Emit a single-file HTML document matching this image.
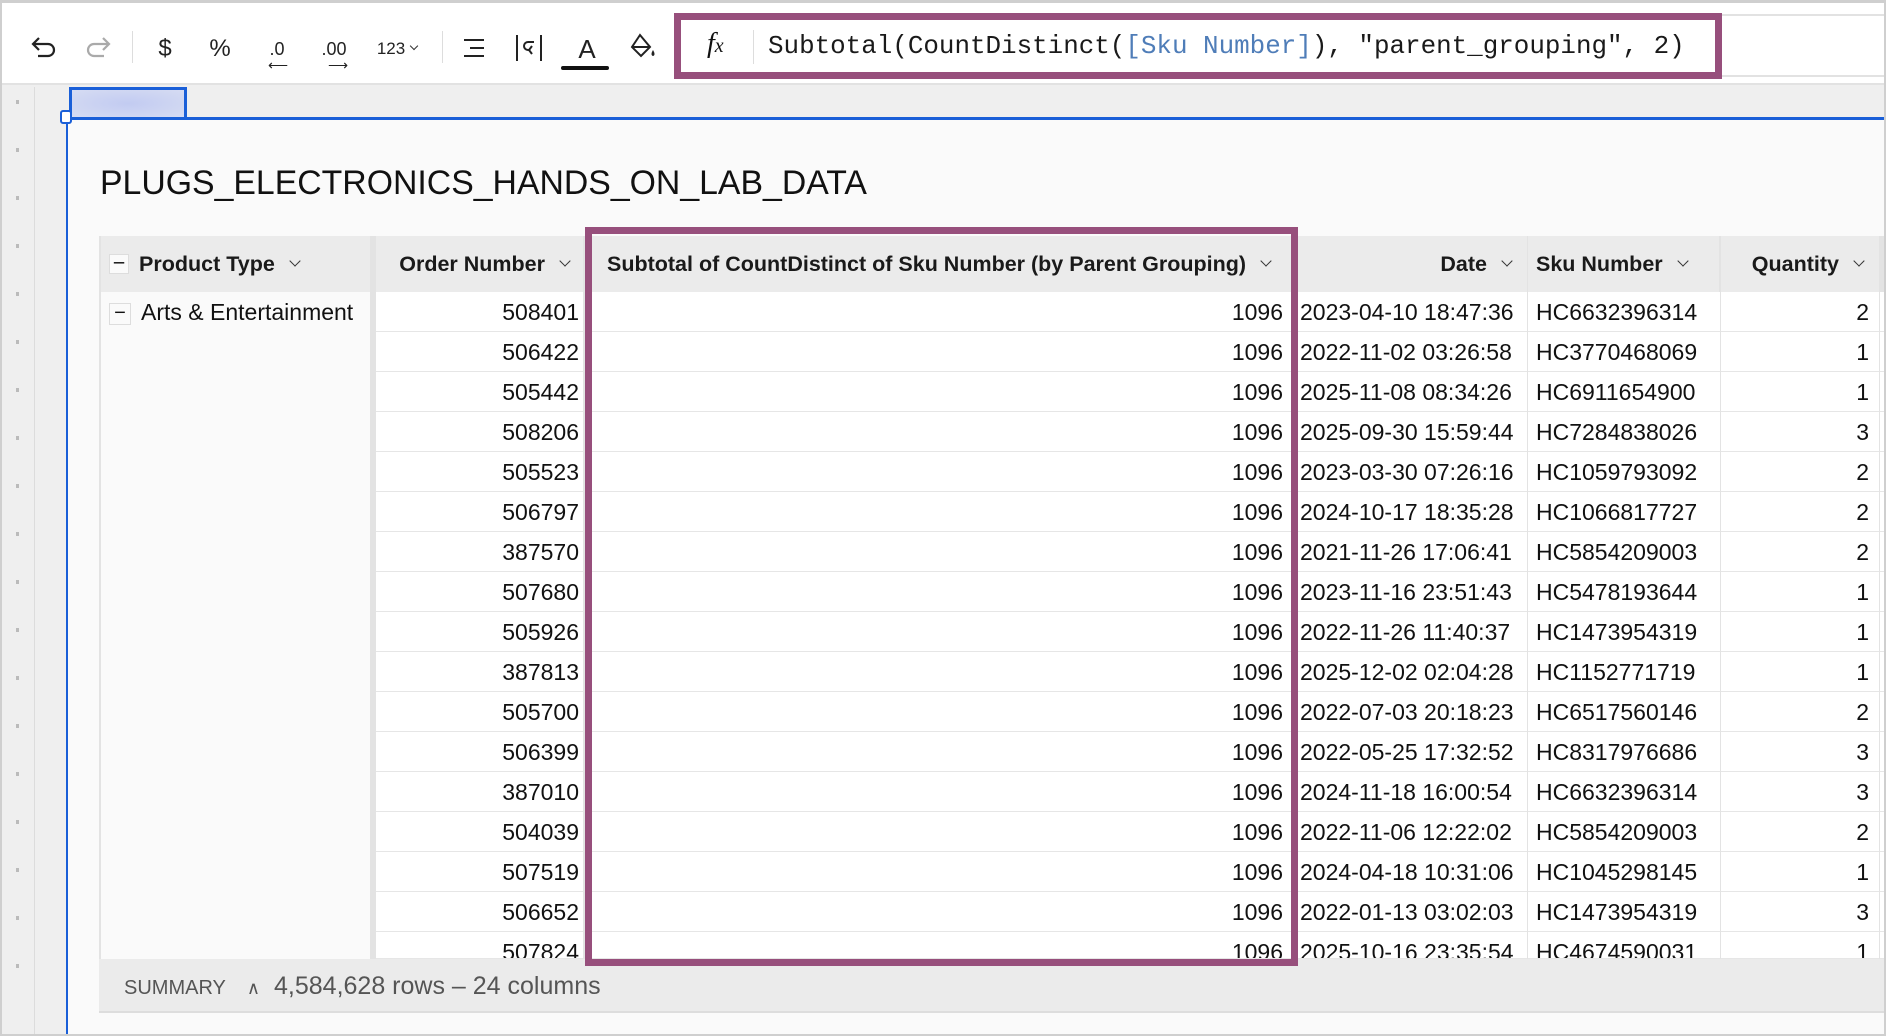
<!DOCTYPE html>
<html><head><meta charset="utf-8"><style>
*{box-sizing:border-box;margin:0;padding:0}
body{width:1886px;height:1036px;overflow:hidden;background:#efefef;font-family:"Liberation Sans",sans-serif;position:relative;color:#111}
.abs{position:absolute}
.tb{left:0;top:0;width:1886px;height:85px;background:#fff;border-top:3px solid #cfcfcf;border-bottom:2px solid #e2e2e2}
.ic{position:absolute;top:30px;height:32px;display:flex;align-items:center;justify-content:center;font-size:24px;color:#222}
.sep{position:absolute;top:28px;width:1px;height:32px;background:#ddd}
.fbox{left:674px;top:13px;width:1048px;height:66px;border:7px solid #974f7c;background:#fff}
.mono{font-family:"Liberation Mono",monospace;font-size:25.9px;color:#1a1a1a}
.el{left:66px;top:117px;width:1820px;height:919px;background:#fafafa;border-left:2px solid #1a5fd8;border-top:3px solid #1a5fd8}
.hd{position:absolute;top:236px;height:56px;background:#ebebeb;font-weight:bold;font-size:21.5px;display:flex;align-items:center;color:#1a1a1a}
.chev{display:inline-block;width:8px;height:8px;border-right:1.6px solid #333;border-bottom:1.6px solid #333;transform:rotate(45deg);margin-left:16px;margin-top:-6px}
.cell{position:absolute;height:40px;font-size:23px;line-height:40px;white-space:nowrap;border-bottom:1.5px solid #e6e6e6;background:#fff}
.r{text-align:right;padding-right:4px}
.l{padding-left:8px}
</style></head><body>
<div class="abs tb">
 <svg class="abs" style="left:30px;top:32px" width="28" height="24" viewBox="0 0 28 24"><path d="M9 3 L3 9 L9 15 M3 9 H18 a6 6 0 0 1 0 12 H8" fill="none" stroke="#222" stroke-width="2.2"/></svg>
 <svg class="abs" style="left:84px;top:32px" width="28" height="24" viewBox="0 0 28 24"><path d="M19 3 L25 9 L19 15 M25 9 H10 a6 6 0 0 0 0 12 H20" fill="none" stroke="#aaa" stroke-width="2.2"/></svg>
 <div class="sep" style="left:132px"></div>
 <div class="ic" style="left:152px;width:26px">$</div>
 <div class="ic" style="left:206px;width:28px">%</div>
 <div class="ic" style="left:260px;width:34px;font-size:18px">.0<span style="position:absolute;top:24px;left:8px;font-size:14px">⟵</span></div>
 <div class="ic" style="left:316px;width:36px;font-size:18px">.00<span style="position:absolute;top:24px;left:12px;font-size:14px">⟶</span></div>
 <div class="ic" style="left:372px;width:50px;font-size:17px">123 <span class="chev" style="margin-left:6px;width:6px;height:6px"></span></div>
 <div class="sep" style="left:442px"></div>
 <svg class="abs" style="left:462px;top:34px" width="24" height="22"><path d="M2 3H22M8 11H22M2 19H22" stroke="#222" stroke-width="2"/></svg>
 <svg class="abs" style="left:514px;top:30px" width="30" height="30"><path d="M3 2V28M27 2V28M20 9h-6a4 4 0 0 0 0 8h2M18 13l-3 4 3 4" fill="none" stroke="#222" stroke-width="2"/></svg>
 <div class="ic" style="left:570px;width:34px;font-size:26px">A</div>
 <div class="abs" style="left:561px;top:63px;width:48px;height:4px;background:#111;border-radius:2px"></div>
 <svg class="abs" style="left:628px;top:29px" width="30" height="32"><path d="M12 3 L4 15 L13 24 L22 15 Z M4 15 H22" fill="none" stroke="#222" stroke-width="2"/><path d="M25 18 q3 5 0 6 q-3-1 0-6" fill="#222"/></svg>
</div>
<div class="abs" style="left:1722px;top:14px;width:164px;height:2px;background:#e2e2e2"></div>
<div class="abs" style="left:1722px;top:75px;width:164px;height:2px;background:#e2e2e2"></div>
<div class="abs fbox">
 <div class="abs" style="left:26px;top:8px;font-family:'Liberation Serif',serif;font-style:italic;font-size:28px">f<span style="font-size:20px">x</span></div>
 <div class="abs" style="left:72px;top:10px;width:1px;height:34px;background:#ddd"></div>
 <div class="abs mono" style="left:87px;top:11px">Subtotal(CountDistinct(<span style="color:#4f7db8">[Sku Number]</span>), "parent_grouping", 2)</div>
</div>
<div class="abs" style="left:34px;top:87px;width:1px;height:949px;background:#dcdcdc"></div>
<div class="abs" style="left:16px;top:100px;width:3px;height:900px;background:repeating-linear-gradient(#efefef 0 0,#bbb 0 4px,#efefef 4px 48px)"></div>
<div class="abs" style="left:69px;top:87px;width:118px;height:30px;border:3px solid #1a5fd8;border-bottom:none;background:radial-gradient(ellipse at center,#c2cbf1,#d6dcf3)"></div>
<div class="abs el"></div>
<div class="abs" style="left:60px;top:110px;width:12px;height:14px;border:2px solid #1a5fd8;background:#fff;border-radius:3px"></div>
<div class="abs" style="left:100px;top:164px;font-size:33.8px;color:#111">PLUGS_ELECTRONICS_HANDS_ON_LAB_DATA</div>
<div class="abs" style="left:99px;top:236px;width:1787px;height:723px;background:#e3e3e3"></div>
<div class="abs" style="left:101px;top:292px;width:269px;height:667px;background:#fafafa"></div>
<div class="hd" style="left:101px;width:269px;padding-left:8px"><span style="display:inline-block;width:20px;height:20px;border:1px solid #ddd;background:#fafafa;text-align:center;line-height:16px;font-weight:normal;margin-right:10px">−</span>Product Type<span class="chev"></span></div>
<div class="hd" style="left:376px;width:207px;justify-content:flex-end;padding-right:14px">Order Number<span class="chev"></span></div>
<div class="hd" style="left:589px;width:704px;padding-left:18px">Subtotal of CountDistinct of Sku Number (by Parent Grouping)<span class="chev"></span></div>
<div class="hd" style="left:1294px;width:233px;justify-content:flex-end;padding-right:16px">Date<span class="chev"></span></div>
<div class="hd" style="left:1528px;width:191px;padding-left:8px">Sku Number<span class="chev"></span></div>
<div class="hd" style="left:1721px;width:158px;justify-content:flex-end;padding-right:16px">Quantity<span class="chev"></span></div>
<div class="abs" style="left:101px;top:292px;width:269px;height:40px;font-size:23px;line-height:40px;padding-left:8px"><span style="display:inline-block;width:22px;height:22px;border:1.5px solid #ddd;text-align:center;line-height:18px;vertical-align:middle;margin-right:10px;font-size:20px">−</span>Arts &amp; Entertainment</div>
<div id="rows"></div>
<div class="abs" style="left:99px;top:959px;width:1787px;height:54px;background:#ebebeb;border-bottom:2px solid #ddd;font-size:25px;color:#555;line-height:54px;padding-left:25px"><span style="font-size:20px">SUMMARY</span> <span style="margin:0 14px;font-size:18px">∧</span>4,584,628 rows – 24 columns</div>
<div class="abs" style="left:585px;top:227px;width:713px;height:739px;border:7px solid #974f7c"></div>
<div class="abs" style="left:1884px;top:0;width:2px;height:1036px;background:#cfcfcf"></div>
<div class="abs" style="left:0;top:1034px;width:1886px;height:2px;background:#cfcfcf"></div>
<div class="abs" style="left:0;top:0;width:2px;height:1036px;background:#cfcfcf"></div>
<script>
var d=[["508401","2023-04-10 18:47:36","HC6632396314","2"],["506422","2022-11-02 03:26:58","HC3770468069","1"],["505442","2025-11-08 08:34:26","HC6911654900","1"],["508206","2025-09-30 15:59:44","HC7284838026","3"],["505523","2023-03-30 07:26:16","HC1059793092","2"],["506797","2024-10-17 18:35:28","HC1066817727","2"],["387570","2021-11-26 17:06:41","HC5854209003","2"],["507680","2023-11-16 23:51:43","HC5478193644","1"],["505926","2022-11-26 11:40:37","HC1473954319","1"],["387813","2025-12-02 02:04:28","HC1152771719","1"],["505700","2022-07-03 20:18:23","HC6517560146","2"],["506399","2022-05-25 17:32:52","HC8317976686","3"],["387010","2024-11-18 16:00:54","HC6632396314","3"],["504039","2022-11-06 12:22:02","HC5854209003","2"],["507519","2024-04-18 10:31:06","HC1045298145","1"],["506652","2022-01-13 03:02:03","HC1473954319","3"],["507824","2025-10-16 23:35:54","HC4674590031","1"]];
var h="";
d.forEach(function(r,i){var t=292+i*40;var hh=Math.min(40,959-t);
var c=function(l,w,cls,tx){return '<div class="cell '+cls+'" style="left:'+l+'px;top:'+t+'px;width:'+w+'px;height:'+hh+'px;overflow:hidden">'+tx+'</div>'};
h+=c(376,207,"r",r[0])+c(589,704,"r",'1096<span style="display:inline-block;width:6px"></span>')+c(1294,233,"",'<span style="padding-left:6px">'+r[1]+'</span>')+c(1528,192,"l",r[2])+c(1721,158,"r",r[3]+'<span style="display:inline-block;width:6px"></span>')+c(1880,6,"","");});
document.getElementById("rows").innerHTML=h;
</script>
</body></html>
